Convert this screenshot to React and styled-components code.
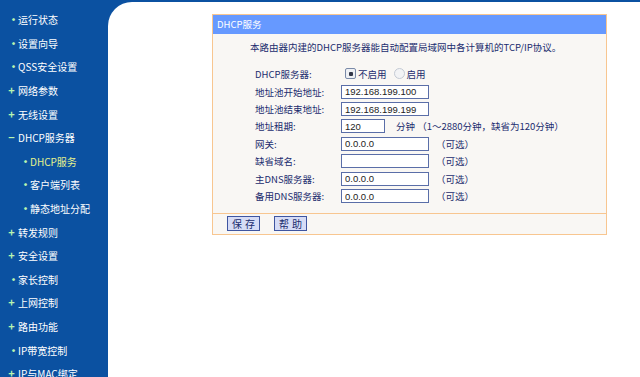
import React from "react";
import styled, { createGlobalStyle } from "styled-components";

const GlobalStyle = createGlobalStyle`
  html, body {
    margin: 0;
    padding: 0;
    background: #0b51a1;
  }
  body {
    font-family: "Noto Sans CJK SC", "Noto Sans", sans-serif;
  }
`;

const Page = styled.div`
  display: flex;
  width: 640px;
  height: 377px;
  overflow: hidden;
  background: #0b51a1;
`;

const Sidebar = styled.ul`
  list-style: none;
  margin: 0;
  padding: 8px 0 0 0;
  width: 108px;
  flex-shrink: 0;
`;

const MenuItem = styled.li`
  display: flex;
  align-items: center;
  height: 23.6px;
  padding-left: ${(p) => (p.sub ? "20px" : "8px")};
  color: ${(p) => (p.active ? "#e4f28c" : "#ffffff")};
  font-size: 10px;
  white-space: nowrap;
`;

const Mark = styled.span`
  width: 7px;
  margin-right: 3px;
  text-align: center;
  color: #b8f5b0;
  font-size: ${(p) => (p.kind === "dot" ? "11px" : "11px")};
  font-weight: bold;
  line-height: 1;
`;

const Main = styled.div`
  flex: 1;
  margin-top: 2px;
  background: #ffffff;
  border-top-left-radius: 24px;
  padding: 12px 0 0 104px;
`;

const Panel = styled.div`
  width: 393px;
  border: 1px solid #f8c690;
  background: #f9f7f4;
`;

const PanelHeader = styled.div`
  height: 19px;
  line-height: 19px;
  background: #6699ff;
  color: #ffffff;
  font-size: 9.5px;
  padding-left: 4px;
`;

const PanelBody = styled.div`
  padding: 6px 0 8px 0;
`;

const Intro = styled.p`
  margin: 0 0 10px 37px;
  font-size: 9.5px;
  line-height: 14px;
  color: #1b2c6e;
`;

const Form = styled.div`
  display: flex;
  flex-direction: column;
  padding-left: 42px;
`;

const Row = styled.div`
  display: flex;
  align-items: center;
  height: ${(p) => (p.tall ? "19px" : "17.4px")};
`;

const Label = styled.span`
  width: 86px;
  font-size: 9.5px;
  color: #1b2c6e;
`;

const TextInput = styled.input`
  box-sizing: border-box;
  width: ${(p) => p.w || 88}px;
  height: 14px;
  border: 1px solid #5a6ea8;
  background: #ffffff;
  padding: 0 0 0 3px;
  margin: 0;
  font-family: "Liberation Sans", Arial, sans-serif;
  font-size: 9.5px;
  color: #222;
  outline: none;
`;

const Hint = styled.span`
  margin-left: ${(p) => p.gap || 7}px;
  font-size: 9.5px;
  color: #1b2c6e;
  white-space: nowrap;
`;

const RadioWrap = styled.label`
  display: flex;
  align-items: center;
  margin-left: ${(p) => p.gap || 4}px;
  font-size: 9.5px;
  color: #1b2c6e;
`;

const RadioDot = styled.span`
  position: relative;
  box-sizing: border-box;
  width: 11px;
  height: 11px;
  margin-right: 2px;
  border: 1px solid ${(p) => (p.checked ? "#7a8aa8" : "#c4cad4")};
  border-radius: ${(p) => (p.checked ? "2px" : "50%")};
  background: ${(p) => (p.checked ? "#eef0f4" : "#f2f3f5")};
  &::after {
    content: "";
    display: ${(p) => (p.checked ? "block" : "none")};
    position: absolute;
    left: 2.5px;
    top: 2.5px;
    width: 4px;
    height: 4px;
    border-radius: 1px;
    background: #33384a;
  }
`;

const Footer = styled.div`
  display: flex;
  align-items: center;
  gap: 14px;
  height: 20px;
  padding-left: 14px;
  border-top: 1px solid #f8c690;
`;

const Button = styled.button`
  box-sizing: border-box;
  height: 15px;
  width: 33px;
  padding: 0;
  border: 1px solid #3f55a0;
  background: #d6dcf6;
  color: #1b2c6e;
  font-family: "Noto Sans CJK SC", sans-serif;
  font-size: 10px;
  line-height: 13px;
  letter-spacing: 3px;
  text-indent: 3px;
`;

const menu = [
  { text: "运行状态", mark: "dot" },
  { text: "设置向导", mark: "dot" },
  { text: "QSS安全设置", mark: "dot" },
  { text: "网络参数", mark: "plus" },
  { text: "无线设置", mark: "plus" },
  { text: "DHCP服务器", mark: "minus" },
  { text: "DHCP服务", mark: "dot", sub: true, active: true },
  { text: "客户端列表", mark: "dot", sub: true },
  { text: "静态地址分配", mark: "dot", sub: true },
  { text: "转发规则", mark: "plus" },
  { text: "安全设置", mark: "plus" },
  { text: "家长控制", mark: "dot" },
  { text: "上网控制", mark: "plus" },
  { text: "路由功能", mark: "plus" },
  { text: "IP带宽控制", mark: "dot" },
  { text: "IP与MAC绑定", mark: "plus" },
];

const markChar = { dot: "•", plus: "+", minus: "−" };

const optionalRows = [
  { label: "网关:", value: "0.0.0.0" },
  { label: "缺省域名:", value: "" },
  { label: "主DNS服务器:", value: "0.0.0.0" },
  { label: "备用DNS服务器:", value: "0.0.0.0" },
];

export default function App() {
  return (
    <Page>
      <GlobalStyle />
      <Sidebar>
        {menu.map((m) => (
          <MenuItem key={m.text} sub={m.sub} active={m.active}>
            <Mark kind={m.mark}>{markChar[m.mark]}</Mark>
            {m.text}
          </MenuItem>
        ))}
      </Sidebar>
      <Main>
        <Panel>
          <PanelHeader>DHCP服务</PanelHeader>
          <PanelBody>
            <Intro>本路由器内建的DHCP服务器能自动配置局域网中各计算机的TCP/IP协议。</Intro>
            <Form>
              <Row tall>
                <Label>DHCP服务器:</Label>
                <RadioWrap>
                  <RadioDot checked />
                  不启用
                </RadioWrap>
                <RadioWrap gap={7}>
                  <RadioDot />
                  启用
                </RadioWrap>
              </Row>
              <Row>
                <Label>地址池开始地址:</Label>
                <TextInput defaultValue="192.168.199.100" />
              </Row>
              <Row>
                <Label>地址池结束地址:</Label>
                <TextInput defaultValue="192.168.199.199" />
              </Row>
              <Row>
                <Label>地址租期:</Label>
                <TextInput w={44} defaultValue="120" />
                <Hint gap={11}>分钟 （1～2880分钟，缺省为120分钟）</Hint>
              </Row>
              {optionalRows.map((r) => (
                <Row key={r.label}>
                  <Label>{r.label}</Label>
                  <TextInput defaultValue={r.value} />
                  <Hint>（可选）</Hint>
                </Row>
              ))}
            </Form>
          </PanelBody>
          <Footer>
            <Button>保存</Button>
            <Button>帮助</Button>
          </Footer>
        </Panel>
      </Main>
    </Page>
  );
}
